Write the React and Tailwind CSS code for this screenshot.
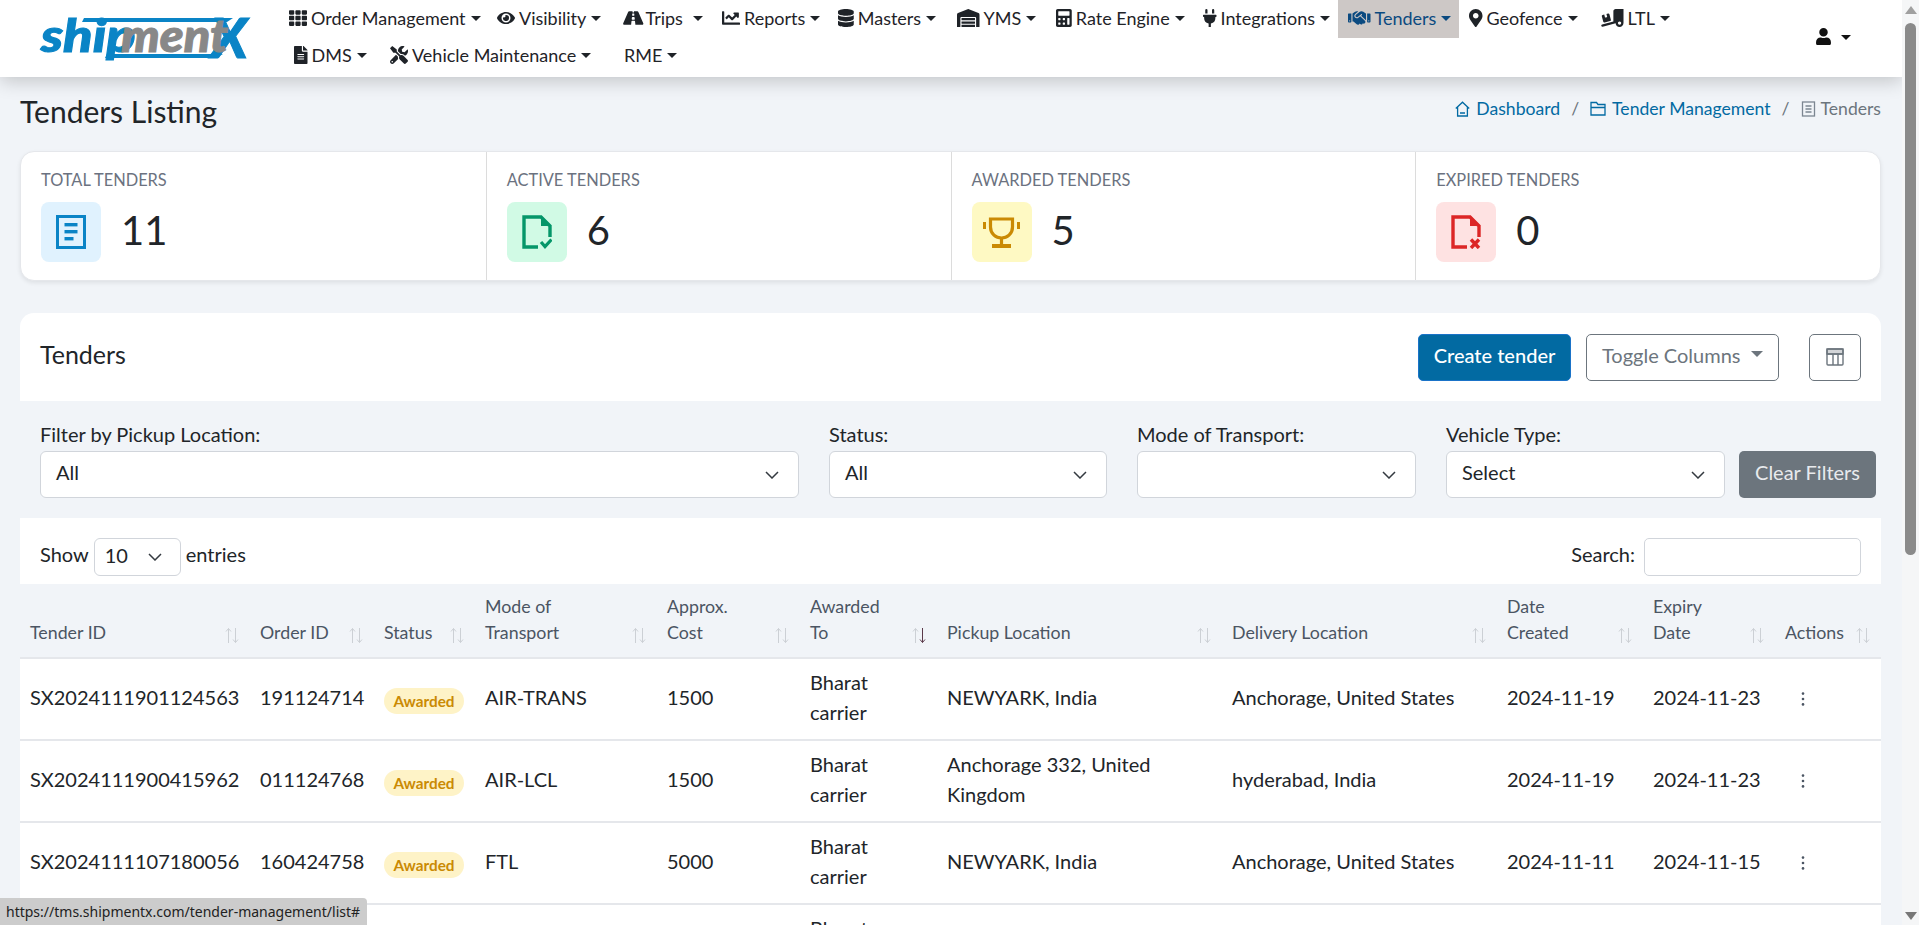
import React from "react";
import { FaTh, FaEye, FaRoad, FaChartLine, FaDatabase, FaWarehouse, FaCalculator, FaPlug, FaMapMarkerAlt, FaFileAlt, FaTools, FaUser } from "react-icons/fa";
import { FaHandshake, FaTruckRampBox } from "react-icons/fa6";

const Caret = ({ className = "" }) => (
  <span className={`inline-block shrink-0 w-0 h-0 border-x-[5px] border-x-transparent border-t-[5px] border-t-current ${className}`} />
);

const Chevron = () => (
  <svg width="14" height="8" viewBox="0 0 14 8" fill="none" stroke="#343a40" strokeWidth="1.5" className="shrink-0">
    <path d="M1 1 L7 7 L13 1" />
  </svg>
);

function Logo() {
  return (
    <svg width="222" height="44" viewBox="0 0 222 44" className="block overflow-visible">
      <path d="M43 0 H192 L186 4 H41 Z" fill="#0a84c6" />
      <path d="M66 36 H182 L175 40 H64 Z" fill="#0a84c6" />
      <g transform="translate(170 40) scale(1.02 1)">
        <text fontFamily="Lato" fontWeight="900" fontStyle="italic" fontSize="56" fill="#0a84c6" stroke="#0a84c6" strokeWidth="1">X</text>
      </g>
      <g transform="translate(0 34) scale(1.18 1)">
        <text fontFamily="Lato" fontWeight="900" fontStyle="italic" fontSize="46" fill="#0a84c6" stroke="#0a84c6" strokeWidth="1">ship</text>
      </g>
      <g transform="translate(80 34) scale(1.06 1)">
        <text fontFamily="Lato" fontWeight="900" fontStyle="italic" fontSize="46" fill="#888888" stroke="#888888" strokeWidth="1">ment</text>
      </g>
    </svg>
  );
}

const square = "w-[18px] mr-[4px]";
const wide = "w-[22.5px] mr-[4px]";
const tall = "w-[13.5px] mr-[4px]";
const mid = "w-[15.75px] mr-[4px]";

function NavItem({ icon: I, label, active, width, caretGap = "ml-[5px]", iconClass = square }) {
  return (
    <a className={`flex items-center h-[38px] px-[10px] pb-[2px] text-[18px] whitespace-nowrap ${width} ${active ? "bg-[#cdc8c6] text-[#0b4a80]" : "text-[#1f2328]"}`}>
      {I && <I className={`shrink-0 h-[18px] ${iconClass}`} />}
      <span>{label}</span>
      <Caret className={caretGap} />
    </a>
  );
}

function Sort({ active }) {
  return (
    <svg width="16" height="17" viewBox="0 0 16 17" className="shrink-0 mb-[1px]" fill="none" strokeWidth="1">
      <path d="M4.5 16 V1.5 M2 4.5 L4.5 1.5 L7 4.5" stroke="#ccd0d5" />
      <path d="M11.5 1 V15.5 M9 12.5 L11.5 15.5 L14 12.5" stroke={active ? "#5b3a4a" : "#ccd0d5"} />
    </svg>
  );
}

const DocIcon = ({ color, kind }) => (
  <svg width="30" height="34" viewBox="0 0 30 34" fill="none">
    <path d="M16 32 H2 V2 H19 L28 11 V22" stroke={color} strokeWidth="3.4" />
    <path d="M19 0.5 V11 H29.5 Z" fill={color} />
    {kind === "check" ? (
      <path d="M19 27 L23 31.5 L29.5 24.5" stroke={color} strokeWidth="3.2" />
    ) : (
      <path d="M20 24.5 L28 33 M28 24.5 L20 33" stroke={color} strokeWidth="3.4" />
    )}
  </svg>
);

const ListIcon = () => (
  <svg width="30" height="34" viewBox="0 0 30 34" fill="none">
    <rect x="1.5" y="1.5" width="27" height="31" stroke="#0a84c6" strokeWidth="3" />
    <rect x="8.5" y="8" width="13" height="3.4" fill="#0a84c6" />
    <rect x="8.5" y="15" width="13" height="3.4" fill="#0a84c6" />
    <rect x="8.5" y="22" width="9" height="3.4" fill="#0a84c6" />
  </svg>
);

const TrophyIcon = () => (
  <svg width="37" height="31" viewBox="0 0 37 31" fill="none" stroke="#ca8a04">
    <path d="M7.5 2 H29.5 V10 C29.5 17 24 21 18.5 21 C13 21 7.5 17 7.5 10 Z" strokeWidth="3.2" />
    <path d="M18.5 21 V28" strokeWidth="3.2" />
    <path d="M9 29 H28" strokeWidth="4" />
    <path d="M1.5 5 V12 M35.5 5 V12" strokeWidth="3" />
  </svg>
);

const HomeIcon = () => (
  <svg width="15" height="16" viewBox="0 0 15 16" fill="none" stroke="#026aa2" strokeWidth="1.3" className="mr-[6px] shrink-0">
    <path d="M0.8 7.5 L7.5 1.2 L14.2 7.5 M2.6 6.2 V15 H12.4 V6.2 M5 12 H10" />
  </svg>
);

const FolderIcon = () => (
  <svg width="16" height="15" viewBox="0 0 16 15" fill="none" stroke="#026aa2" strokeWidth="1.3" className="mr-[6px] shrink-0">
    <path d="M1 14 V1.5 H6.5 L8 3.5 H15 V14 Z M1 6.5 H15" />
  </svg>
);

const PageIcon = () => (
  <svg width="15" height="16" viewBox="0 0 15 16" fill="none" stroke="#7c8691" strokeWidth="1.3" className="mr-[5px] shrink-0">
    <rect x="1.5" y="1" width="12" height="14" />
    <path d="M4.5 5 H10.5 M4.5 8 H10.5 M4.5 11 H10.5" />
  </svg>
);

const stats = [
  { l: "TOTAL TENDERS", v: "11", bg: "bg-[#e0f2fe]", icon: <ListIcon /> },
  { l: "ACTIVE TENDERS", v: "6", bg: "bg-[#d1fae5]", icon: <DocIcon color="#059669" kind="check" /> },
  { l: "AWARDED TENDERS", v: "5", bg: "bg-[#fef9c3]", icon: <TrophyIcon /> },
  { l: "EXPIRED TENDERS", v: "0", bg: "bg-[#fee2e2]", icon: <DocIcon color="#dc2626" kind="x" /> },
];

const cols = [
  [["Tender ID"], "w-[230px]"],
  [["Order ID"], "w-[124px]"],
  [["Status"], "w-[101px]"],
  [["Mode of", "Transport"], "w-[182px]"],
  [["Approx.", "Cost"], "w-[143px]"],
  [["Awarded", "To"], "w-[137px]"],
  [["Pickup Location"], "w-[285px]"],
  [["Delivery Location"], "w-[275px]"],
  [["Date", "Created"], "w-[146px]"],
  [["Expiry", "Date"], "w-[132px]"],
  [["Actions"], "w-[106px]"],
];

const rows = [
  ["SX2024111901124563", "191124714", "AIR-TRANS", "1500", "Bharat carrier", "NEWYARK, India", "Anchorage, United States", "2024-11-19", "2024-11-23"],
  ["SX2024111900415962", "011124768", "AIR-LCL", "1500", "Bharat carrier", "Anchorage 332, United Kingdom", "hyderabad, India", "2024-11-19", "2024-11-23"],
  ["SX2024111107180056", "160424758", "FTL", "5000", "Bharat carrier", "NEWYARK, India", "Anchorage, United States", "2024-11-11", "2024-11-15"],
  ["SX2024111107150024", "160424757", "FTL", "5000", "Bharat carrier", "NEWYARK, India", "Anchorage, United States", "2024-11-11", "2024-11-15"],
];

function Filter({ label, value, w }) {
  return (
    <div className={`flex flex-col ${w}`}>
      <label className="h-[33px] leading-[33px] block">{label}</label>
      <div className="flex items-center justify-between bg-white border border-[#d1d5db] rounded-[6px] h-[47px] pl-[15px] pr-[19px]">
        <span className="pb-[5px]">{value}</span>
        <Chevron />
      </div>
    </div>
  );
}

export default function App() {
  return (
    <div className="flex h-[925px] overflow-hidden bg-[#f1f4f8] font-['Lato',sans-serif] text-[20px] text-[#212529]">
      <div className="relative flex-1 min-w-0 overflow-hidden">
        <header className="relative z-10 flex h-[77px] bg-white shadow-[0_4px_18px_rgba(0,0,0,0.2)]">
          <div className="w-[279px] pl-[41px] pt-[18px] shrink-0"><Logo /></div>
          <nav className="flex-1 flex flex-col">
            <div className="flex h-[38px]">
              <NavItem icon={FaTh} label="Order Management" width="w-[208px]" />
              <NavItem icon={FaEye} label="Visibility" width="w-[125px]" />
              <NavItem icon={FaRoad} label="Trips" width="w-[100px]" caretGap="ml-[10px]" iconClass="w-[22.5px] mr-[1px]" />
              <NavItem icon={FaChartLine} label="Reports" width="w-[116px]" />
              <NavItem icon={FaDatabase} label="Masters" width="w-[119px]" iconClass={mid} />
              <NavItem icon={FaWarehouse} label="YMS" width="w-[99px]" iconClass={wide} />
              <NavItem icon={FaCalculator} label="Rate Engine" width="w-[147px]" iconClass={mid} />
              <NavItem icon={FaPlug} label="Integrations" width="w-[145px]" iconClass={tall} />
              <NavItem icon={FaHandshake} label="Tenders" width="w-[121px]" iconClass={wide} active />
              <NavItem icon={FaMapMarkerAlt} label="Geofence" width="w-[132px]" iconClass={tall} />
              <NavItem icon={FaTruckRampBox} label="LTL" width="w-[96px]" iconClass={wide} />
            </div>
            <div className="flex h-[38px] pl-[5px] -mt-[1px]">
              <NavItem icon={FaFileAlt} label="DMS" width="w-[96px]" iconClass={tall} />
              <NavItem icon={FaTools} label="Vehicle Maintenance" width="w-[234px]" />
              <NavItem label="RME" width="w-[90px]" />
            </div>
          </nav>
          <div className="w-[87px] shrink-0 flex items-start pt-[28px] text-[#111]">
            <FaUser className="text-[17px]" />
            <Caret className="mt-[7px] ml-[9px]" />
          </div>
        </header>

        <main className="pl-[20px] pr-[21px]">
          <div className="flex items-center justify-between h-[74px] pb-[6px]">
            <h4 className="text-[30px]">Tenders Listing</h4>
            <div className="flex items-center text-[17.6px] mb-[4px]">
              <HomeIcon />
              <span className="text-[#026aa2]">Dashboard</span>
              <span className="mx-[11px] text-[#6c757d]">/</span>
              <FolderIcon />
              <span className="text-[#026aa2]">Tender Management</span>
              <span className="mx-[11px] text-[#6c757d]">/</span>
              <PageIcon />
              <span className="text-[#6c757d]">Tenders</span>
            </div>
          </div>

          <section className="grid grid-cols-4 h-[130px] bg-white rounded-[14px] border border-[#e5e7eb] shadow-[0_2px_4px_rgba(0,0,0,0.08)]">
            {stats.map((s, i) => (
              <div key={s.l} className={`px-[20px] pt-[18px] ${i ? "border-l border-[#dcdcdc]" : ""}`}>
                <div className="text-[16.4px] leading-[20px] text-[#6b7280]">{s.l}</div>
                <div className="flex items-center mt-[12px]">
                  <div className={`w-[60px] h-[60px] rounded-[8px] flex items-center justify-center ${s.bg}`}>{s.icon}</div>
                  <div className="ml-[20px] mb-[4px] text-[40px] leading-none">{s.v}</div>
                </div>
              </div>
            ))}
          </section>

          <section className="mt-[32px]">
            <div className="flex items-center h-[88px] bg-white rounded-t-[14px] pl-[20px] pr-[20px]">
              <h5 className="text-[25px] mb-[4px]">Tenders</h5>
              <div className="flex items-center ml-auto">
                <button className="w-[153px] h-[47px] pb-[5px] rounded-[5px] bg-[#026aa2] border border-[#1a73c8] text-white font-medium">Create tender</button>
                <button className="flex items-center ml-[15px] w-[193px] h-[47px] pb-[5px] pl-[15px] rounded-[5px] border border-[#6c757d] text-[#6c757d] bg-white">
                  Toggle Columns
                  <span className="inline-block ml-[11px] -mt-[2px] w-0 h-0 border-x-[6px] border-x-transparent border-t-[6px] border-t-[#6c757d]" />
                </button>
                <button className="ml-[30px] w-[52px] h-[47px] rounded-[5px] border border-[#6c757d] bg-white flex items-center justify-center">
                  <svg width="18" height="18" viewBox="0 0 18 18" fill="none" stroke="#6c757d" strokeWidth="1.4"><rect x="1" y="1" width="16" height="16" rx="1" /><path d="M1 6 H17 M7 6 V17 M12 6 V17" /><rect x="1" y="1" width="16" height="5" fill="#6c757d" fillOpacity="0.3" /></svg>
                </button>
              </div>
            </div>

            <div className="flex items-start gap-[30px] h-[117px] pt-[17px] pl-[20px]">
              <Filter label="Filter by Pickup Location:" value="All" w="w-[759px]" />
              <Filter label="Status:" value="All" w="w-[278px]" />
              <Filter label="Mode of Transport:" value="" w="w-[279px]" />
              <div className="flex items-end gap-[14px]">
                <Filter label="Vehicle Type:" value="Select" w="w-[279px]" />
                <button className="w-[137px] h-[47px] pb-[5px] rounded-[5px] bg-[#6c757d] text-[#e8eaed]">Clear Filters</button>
              </div>
            </div>

            <div className="bg-white">
              <div className="flex items-start h-[66px] pt-[20px] pl-[20px] pr-[20px]">
                <span className="leading-[32px]">Show</span>
                <div className="flex items-center justify-between w-[87px] h-[38px] mx-[5px] pb-[1px] pl-[10px] pr-[18px] border border-[#d1d5db] rounded-[6px] bg-white">
                  <span className="pb-[3px]">10</span>
                  <Chevron />
                </div>
                <span className="leading-[32px]">entries</span>
                <span className="ml-auto mr-[9px] leading-[32px]">Search:</span>
                <div className="w-[217px] h-[38px] border border-[#d1d5db] rounded-[5px]" />
              </div>

              <table className="w-full table-fixed border-collapse">
                <thead>
                  <tr className="bg-[#f1f4f8] h-[74px] border-b-2 border-[#e5e7eb]">
                    {cols.map(([t, w]) => (
                      <th key={t[0]} className={`${w} px-[10px] pb-[12px] align-bottom text-left font-normal text-[17.8px] leading-[26px] text-[#4b5563]`}>
                        <div className="flex items-end justify-between">
                          <span className="block">{t.map((x) => <span key={x} className="block">{x}</span>)}</span>
                          <Sort active={t[0] === "Awarded"} />
                        </div>
                      </th>
                    ))}
                  </tr>
                </thead>
                <tbody>
                  {rows.map((r) => (
                    <tr key={r[0]} className="h-[82px] border-b-2 border-[#e5e7eb]">
                      <td className="px-[10px] pb-[4px] leading-[30px]">{r[0]}</td>
                      <td className="px-[10px] pb-[4px] leading-[30px]">{r[1]}</td>
                      <td className="px-[10px]"><span className="inline-flex items-center justify-center w-[80px] h-[26px] rounded-full bg-[#fef3c7] text-[#ca8a04] text-[15.3px] font-bold">Awarded</span></td>
                      <td className="px-[10px] pb-[4px] leading-[30px]">{r[2]}</td>
                      <td className="px-[10px] pb-[4px] leading-[30px]">{r[3]}</td>
                      <td className="px-[10px] pb-[4px] leading-[30px]">{r[4]}</td>
                      <td className="px-[10px] pb-[4px] leading-[30px]">{r[5]}</td>
                      <td className="px-[10px] pb-[4px] leading-[30px]">{r[6]}</td>
                      <td className="px-[10px] pb-[4px] leading-[30px]">{r[7]}</td>
                      <td className="px-[10px] pb-[4px] leading-[30px]">{r[8]}</td>
                      <td className="px-[10px] text-[#4b5563]">
                        <svg width="4" height="14" viewBox="0 0 4 14" className="ml-[16px]" fill="currentColor"><circle cx="2" cy="1.6" r="1.3" /><circle cx="2" cy="7" r="1.3" /><circle cx="2" cy="12.4" r="1.3" /></svg>
                      </td>
                    </tr>
                  ))}
                </tbody>
              </table>
            </div>
          </section>
        </main>

        <div className="absolute left-0 bottom-0 z-20 h-[27px] w-[367px] rounded-tr-[4px] bg-[#cccccc] text-[14px] leading-[27px] px-[6px] text-[#222] font-['Noto_Sans',sans-serif] whitespace-nowrap">https://tms.shipmentx.com/tender-management/list#</div>
      </div>

      <aside className="flex flex-col items-center w-[17px] shrink-0 bg-[#f5f6f7]">
        <div className="mt-[6px] w-0 h-0 border-x-[6px] border-x-transparent border-b-[8px] border-b-[#a0a0a0]" />
        <div className="mt-[9px] w-[11px] h-[532px] rounded-full bg-[#8a8a8a]" />
        <div className="mt-auto mb-[5px] w-0 h-0 border-x-[6px] border-x-transparent border-t-[8px] border-t-[#777]" />
      </aside>
    </div>
  );
}
